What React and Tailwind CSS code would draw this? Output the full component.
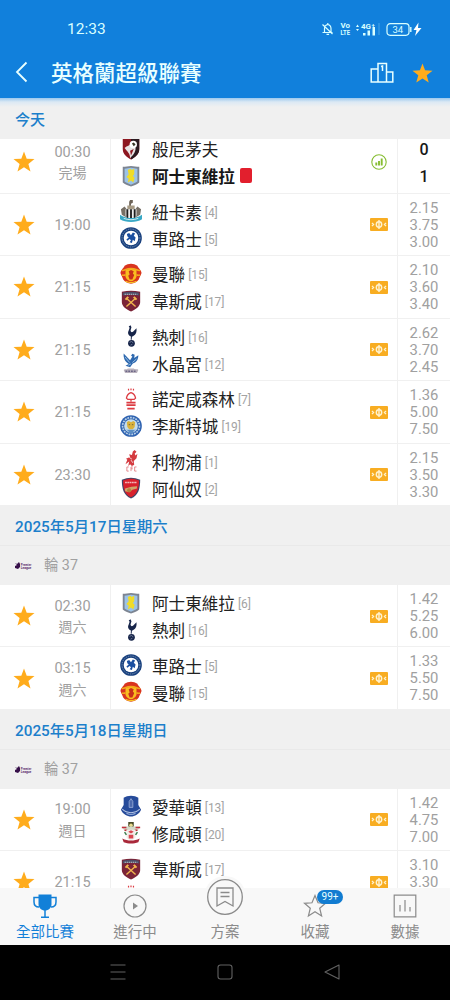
import clsx from "clsx";

const Star = ({ className }) => (
  <svg viewBox="0 0 24 24" className={className}>
    <path d="M12 1.5l2.7 7.2 7.8.4-6.1 4.8 2.1 7.6-6.500-4.300-6.500 4.300 2.100-7.600L1.500 9.100l7.800-.4z" fill="#ffac1c" />
  </svg>
);

const crests = {
  bournemouth: (
    <>
      <path d="M3 1h18v11c0 6-5 9-9 11.500C8 21 3 18 3 12z" fill="#8d1720" />
      <path d="M12 1h9v11c0 6-5 9-9 11.500z" fill="#2b1a20" />
      <path d="M5 11c3-3 5-2 7-5l5 5c0 5-3 8-6 11 0-5-3-7-6-11z" fill="#e8e3e3" />
      <circle cx="14.500" cy="7" r="4" fill="#fff" />
      <path d="M13 6l2-1 2 2-2 2z" fill="#332" />
      <path d="M11 14l4-2-3 7z" fill="#8d1720" />
    </>
  ),
  villa: (
    <>
      <path d="M3 2c3 0 6-1 9-1s6 1 9 1v17c-3 3-6 3-9 4.500-3-1.500-6-1.500-9-4.500z" fill="#7d8592" />
      <path d="M5 4c3 0 4-1 7-1s4 1 7 1v14c-2 2-5 2-7 3.500-2-1.500-5-1.500-7-3.500z" fill="#9cc3e8" />
      <path d="M8.500 5.500l3-1.500 1 1.500 3-1.500v6l-1.500 2 2 2-1.500 5-2.500-2-3.500 2 1-4-2.500-2 2.500-3z" fill="#f0dc28" />
    </>
  ),
  newcastle: (
    <>
      <path d="M11 0h3v3l-2 1v4h-2V2z" fill="#6d6357" />
      <path d="M8 6h8v6H8z" fill="#a89c86" />
      <path d="M1 10l4-3 3 4-1 8-5-3zM23 10l-4-3-3 4 1 8 5-3z" fill="#777066" />
      <path d="M6 10h12v6c0 4-3 5-6 6-3-1-6-2-6-6z" fill="#eee" />
      <path d="M7 10h2v10l-2-1zM11 10h2v11h-2zM15 10h2v9l-2 1z" fill="#1d1d1d" />
      <path d="M0 16c7 5 17 5 24 0v5c-6 4-18 4-24 0z" fill="#38a8c5" />
      <path d="M4 20c5 2 11 2 16 0" stroke="#d8f0f2" strokeWidth="1" fill="none" />
    </>
  ),
  chelsea: (
    <>
      <circle cx="12" cy="12" r="11.800" fill="#173f7d" />
      <circle cx="12" cy="12" r="9.800" fill="none" stroke="#7f97b8" strokeWidth="1" strokeDasharray="1.500 1" />
      <circle cx="12" cy="12" r="8" fill="#fff" />
      <path d="M7.500 7.500l2.500-1 2 2.500 2-3 2.500 1-1.500 2.500 2 2-1 4-2-1.500-1 3.500-2.500-1 1.500-2-1.500-1.500-2.500 2-1-1.500 2.500-2-1.500-1.500z" fill="#1b4fa0" />
    </>
  ),
  manutd: (
    <>
      <path d="M5 3c4-3 10-3 14 0 1 3 4 4 4.500 8-1 3-2 4-3 7-4 6-13 6-17 0-1-3-2-4-3-7C1 7 4 6 5 3z" fill="#d9341f" />
      <path d="M2 8c3 1 4-2 10-2s7 3 10 2M2 13c2 1 3 0 4 0M18 13c1 0 2 1 4 0" stroke="#f2a81c" strokeWidth="1.800" fill="none" />
      <path d="M6 8c4-2 8-2 12 0v7c-1 3-4 5-6 5s-5-2-6-5z" fill="#f9bd1f" />
      <path d="M9.500 9l2.500-1.500L15 9l-1 2.500 1.500 1.500-2 5h-3L9 14l1.500-1.500z" fill="#c8301a" />
      <path d="M6 20c4 2 8 2 12 0" stroke="#f8c524" strokeWidth="1.300" fill="none" />
    </>
  ),
  westham: (
    <>
      <path d="M2 2c7-1.500 13-1.500 20 0v11c0 5-5 8-10 10.500C7 21 2 18 2 13z" fill="#7b2437" />
      <path d="M3 3c6-1.500 12-1.500 18 0v3c-6-1-12-1-18 0z" fill="#4c4b66" />
      <path d="M5 4.600h14" stroke="#bcc" strokeWidth="1.200" strokeDasharray="1.500 .7" />
      <path d="M7 9l10 9M17 9L7 18" stroke="#f1b64e" strokeWidth="1.500" />
      <path d="M6 10.500L9 7.500M18 10.500L15 7.500" stroke="#f1b64e" strokeWidth="2.300" />
    </>
  ),
  spurs: (
    <>
      <circle cx="12.500" cy="20" r="3.700" fill="#17254a" />
      <path d="M9.500 1.500L11.500.3l1 2.200-1 3.500c.5 2.500 2 2.500 4 0l2.500-2.500c.5 4-.5 7-3.500 8.500l-1.500.8-.3 3.200h-1l.2-3.500C9 11.500 8 8.500 9.500 6l1-3z" fill="#17254a" />
      <path d="M10.500 19l2-1 2 1.500M11.500 22l2-1" stroke="#8692aa" strokeWidth=".8" fill="none" />
    </>
  ),
  palace: (
    <>
      <path d="M11 9L4 1.500c-.5 5 1.500 9 5.500 11.500L6 15l5 1.500 3-4c3.500-1 6-4 6-9l-4.500 3 .5-3.500-2.500-1-1.500 2 1.500 1z" fill="#2e69af" />
      <path d="M5.500 5.500l5 6M18 7.500l-4.500 4M9 14.500l3-1.500" stroke="#9fc2e4" strokeWidth="1" />
      <path d="M4 19.500c2-1.500 4 0 5-1.500h6c2 1.500 4 0 5 1.500L18.500 23h-13z" fill="#b9b2bd" />
      <path d="M6 21h12" stroke="#6d6687" strokeWidth="1.500" strokeDasharray="2 1" />
    </>
  ),
  forest: (
    <g fill="none" stroke="#dc3b42">
      <path d="M9.300 .8v1.800M12 .5v2M14.700 .8v1.800" strokeWidth="1.300" />
      <path d="M12 5c-3.500 1-4.500 3.500-5 6l1.500 1.500h7L17 11c-.5-2.500-1.500-5-5-6zM12 12.500V15" strokeWidth="1.400" />
      <path d="M7 16h10M7 18.700h10M8 22.500h8" strokeWidth="1.900" />
    </g>
  ),
  leicester: (
    <>
      <circle cx="12" cy="12" r="11.800" fill="#2e62b0" />
      <circle cx="12" cy="12" r="9.200" fill="none" stroke="#b8d0e8" strokeWidth="1.800" strokeDasharray="2 1" />
      <circle cx="12" cy="12" r="7.500" fill="#c5dcea" />
      <path d="M7.500 8l2-1.500L12 8l2.500-1.500 2 1.500-.5 5-2 2.500h-4L8 13z" fill="#d9b23c" />
      <path d="M6.500 16h11L15 17.500 14 20h-4l-1-2.500z" fill="#5c8fc4" />
      <path d="M9.500 10.500h1.500M13 10.500h1.500" stroke="#76633a" strokeWidth="1" />
    </>
  ),
  liverpool: (
    <>
      <path d="M16 0l2 2-2 2 1 2 2-2-1 5-3 3 .5 4-2.500 1.500-2-2-2 2 1-5-4 3 2-5-1.500-1 4.500-2-1-3 3 1 1-4z" fill="#d43a3f" />
      <path d="M10 8l3 2M12 11l2 3" stroke="#fff" strokeWidth=".8" />
      <path d="M9.500 18.500h-2V23h2M12 23v-4.500h2M12 20.500h2M18 18.500h-2V23h2" fill="none" stroke="#df747b" strokeWidth=".9" />
    </>
  ),
  arsenal: (
    <>
      <path d="M2 3c7-3 13-3 20 0 0 10-2 17-10 20.500C4 20 2 13 2 3z" fill="#3d4468" />
      <path d="M3.300 3.800c6-2.500 11.500-2.500 17.400 0 0 9-2 15-8.700 18.400C5.300 19 3.300 13 3.300 3.800z" fill="#d8212c" />
      <path d="M5.500 6h13" stroke="#f2b9ba" strokeWidth="1.800" strokeDasharray="2 .5" />
      <path d="M5.500 12.500l7-2 6-.5v2.500l-5 1.500-3.500 2.500-4.500-1z" fill="#cfa66b" />
      <circle cx="10" cy="14.500" r="2.300" fill="#b6813f" />
    </>
  ),
  everton: (
    <>
      <path d="M4 3c4-3 12-3 16 0v8l3 5c-2 5-7 7-11 7.500C8 23 3 21 1 16l3-5z" fill="#264b9a" />
      <path d="M2.500 15.500c5 5 14 5 19 0" stroke="#b9c8e6" strokeWidth="1.100" fill="none" />
      <path d="M10 13.500V7l2-3 2 3v6.500z" stroke="#9bb0da" strokeWidth=".9" fill="#4b69ad" />
      <path d="M7 20c3 1.500 7 1.500 10 0" stroke="#8ea6d4" strokeWidth="1.200" fill="none" />
    </>
  ),
  southampton: (
    <>
      <path d="M9 0h6v5l-3 2-3-2z" fill="#494b27" />
      <circle cx="12" cy="3.500" r="1.900" fill="#e9dc8e" />
      <path d="M2 5h20l-3 5H5z" fill="#d4d9c8" />
      <path d="M2 6h5M17 6h5M5 9h3M16 9h3" stroke="#c3303d" strokeWidth="1.800" />
      <path d="M7 8.500h10V17l-5 4-5-4z" fill="#f3eeea" />
      <path d="M9 10.500l3-1.500 3 1.500-3 2zM9.500 14h5v4h-5z" fill="#d84650" />
      <path d="M5 11l2 3M19 11l-2 3" stroke="#3d7c4c" strokeWidth="1.600" />
      <path d="M2.500 18c6 3 13 3 19 0l-1.500 4c-5 2-11 2-16 0z" fill="#a9283a" />
    </>
  ),
};

const Crest = ({ name }) => (
  <svg viewBox="0 0 24 24" className="h-[22px] w-[22px] shrink-0">
    {crests[name]}
  </svg>
);

const FieldIcon = () => (
  <svg viewBox="0 0 18 13" className="h-[13px] w-[18px]">
    <rect width="18" height="13" rx="1" fill="#f8ad22" />
    <g fill="none" stroke="#fff3d0" strokeWidth="1.400">
      <circle cx="9" cy="6.500" r="2.700" />
      <path d="M9 2v9M2 5l1.500 1.500L2 8M16 5l-1.500 1.500L16 8" />
    </g>
  </svg>
);

const StatsIcon = () => (
  <svg viewBox="0 0 16 16" className="h-4 w-4">
    <circle cx="8" cy="8" r="7.200" fill="#fff" stroke="#86bd32" strokeWidth="1.100" />
    <path d="M5.300 8.500v3M8 7v4.500M10.700 4.500v7" stroke="#86bd32" strokeWidth="1.900" />
  </svg>
);

const todayMatches = [
  { time: "19:00", home: ["newcastle", "紐卡素", 4], away: ["chelsea", "車路士", 5], odds: ["2.15", "3.75", "3.00"] },
  { time: "21:15", home: ["manutd", "曼聯", 15], away: ["westham", "韋斯咸", 17], odds: ["2.10", "3.60", "3.40"] },
  { time: "21:15", home: ["spurs", "熱刺", 16], away: ["palace", "水晶宮", 12], odds: ["2.62", "3.70", "2.45"] },
  { time: "21:15", home: ["forest", "諾定咸森林", 7], away: ["leicester", "李斯特城", 19], odds: ["1.36", "5.00", "7.50"] },
  { time: "23:30", home: ["liverpool", "利物浦", 1], away: ["arsenal", "阿仙奴", 2], odds: ["2.15", "3.50", "3.30"] },
];

const finishedMatch = { time: "00:30", note: "完場", home: ["bournemouth", "般尼茅夫"], away: ["villa", "阿士東維拉"], score: [0, 1], winner: "away", redCard: true };

const saturdayMatches = [
  { time: "02:30", note: "週六", home: ["villa", "阿士東維拉", 6], away: ["spurs", "熱刺", 16], odds: ["1.42", "5.25", "6.00"] },
  { time: "03:15", note: "週六", home: ["chelsea", "車路士", 5], away: ["manutd", "曼聯", 15], odds: ["1.33", "5.50", "7.50"] },
];

const sundayMatches = [
  { time: "19:00", note: "週日", home: ["everton", "愛華頓", 13], away: ["southampton", "修咸頓", 20], odds: ["1.42", "4.75", "7.00"] },
  { time: "21:15", home: ["westham", "韋斯咸", 17], away: ["forest"], odds: ["3.10", "3.30"] },
];

const Team = ({ team, bold, redCard }) => {
  const [crest, name, rank] = team;
  return (
    <div className="flex h-[27px] items-center">
      <Crest name={crest} />
      {name && <span className={clsx("ml-[10px] pt-[5px] text-[16.600px] leading-[22px] whitespace-nowrap", bold ? "font-bold text-[#171717]" : "text-[#222]")}>{name}</span>}
      {rank && <span className="ml-[3px] pt-[3px] text-[12px] leading-[18px] tracking-[-0.1px] text-[#a3a3a3]">[{rank}]</span>}
      {redCard && <span className="ml-[5px] h-[15px] w-3 rounded-[2px] bg-[#e21f2d]" />}
    </div>
  );
};

const MatchRow = ({ match }) => (
  <div className="flex h-[62.5px] shrink-0 border-b border-[#f0f0f0] bg-white">
    <div className="flex w-[111px] items-center border-r border-[#f0f0f0]">
      <Star className="mt-px ml-3 h-6 w-6 shrink-0" />
      <div className="ml-[3px] flex w-[67px] flex-col items-center pt-[3px] text-[14.500px] leading-[20.500px] text-[#a0a0a0]">
        <span>{match.time}</span>
        {match.note && <span className="text-[14px]">{match.note}</span>}
      </div>
    </div>
    <div className="flex flex-1 flex-col justify-center pt-px pl-[9px]">
      <Team team={match.home} bold={match.winner === "home"} />
      <Team team={match.away} bold={match.winner === "away"} redCard={match.redCard} />
    </div>
    <div className="flex w-[36px] items-center justify-center pt-px">{match.score ? <StatsIcon /> : <FieldIcon />}</div>
    <div className="flex w-[53px] flex-col items-center border-l border-[#f0f0f0] pt-[6px]">
      {match.score
        ? match.score.map((goals, i) => (
            <span key={i} className="text-base leading-[26.500px] font-medium text-[#171717]">
              {goals}
            </span>
          ))
        : match.odds.map((odd, i) => (
            <span key={i} className="text-[14.800px] leading-[17px] text-[#a0a0a0]">
              {odd}
            </span>
          ))}
    </div>
  </div>
);

const DateHeader = ({ date }) => (
  <>
    <div className="flex h-10 shrink-0 items-center border-b border-[#e9e9e9] bg-[#f0f0f0] pt-1 pl-[15px] text-[15.300px] font-medium text-[#1c7fcb]">{date}</div>
    <div className="flex h-[38.750px] shrink-0 items-center bg-[#f0f0f0] pt-px pl-[14px] text-[14.300px] text-[#a0a0a0]">
      <svg viewBox="0 0 18 9" className="h-[9px] w-[18px] overflow-visible">
        <path d="M1 2l2 1 2-2 1 2v3L4 8 1 7V5l2-1z" fill="#37104a" />
        <text x="6.800" y="4.500" fontSize="3.900" fontWeight="700" fill="#5c2d6e" textLength="10.500" lengthAdjust="spacingAndGlyphs">
          Premier
        </text>
        <text x="6.800" y="7.800" fontSize="3.900" fontWeight="700" fill="#5c2d6e" textLength="10.500" lengthAdjust="spacingAndGlyphs">
          League
        </text>
      </svg>
      <span className="ml-3">輪 37</span>
    </div>
  </>
);

const StatusBar = () => (
  <div className="flex h-[49px] items-center pt-[9px] pr-[27px] pl-[67px] text-[#d9ffff]">
    <span className="text-[15.500px] leading-5">12:33</span>
    <svg viewBox="0 0 100 16" className="ml-auto h-4 w-[100px] overflow-visible" fill="none" stroke="currentColor">
      <path d="M-.5 11.500H9.500M1.500 11V7.500c0-2.500 1-3.500 3.300-4 2.200.5 3.200 1.500 3.200 4V11M4.800 2v1.500M3.500 13.300h2.600M-.5 3.500l10 9.500" strokeWidth="1.200" />
      <g fill="currentColor" stroke="none" fontWeight="700">
        <text x="17.500" y="7.300" fontSize="7.500" textLength="9.500" lengthAdjust="spacingAndGlyphs">
          Vo
        </text>
        <text x="17.500" y="14" fontSize="7.500" textLength="9.500" lengthAdjust="spacingAndGlyphs">
          LTE
        </text>
        <text x="38" y="8" fontSize="8">
          4G
        </text>
        <text x="48.500" y="6" fontSize="6">
          +
        </text>
        <path d="M33 6l1.500-2.500L36 6zM33 8l1.500 2L36 8zM40 12h2.500v2.500H40zM44.500 9.500H47v5h-2.500zM49.500 6H52v8.500h-2.500z" />
      </g>
      <path d="M56 2v12" strokeWidth=".7" opacity=".4" />
      <rect x="64" y="2.700" width="22" height="11.600" rx="3.200" strokeWidth="1.200" />
      <path d="M87.800 6v5" strokeWidth="1.400" />
      <text x="69.500" y="12" fontSize="9.500" fill="currentColor" stroke="none">
        34
      </text>
      <path d="M95.500 1.500L90.500 9h3L92 15l6.500-8H95z" fill="#fff" stroke="none" />
    </svg>
  </div>
);

const TitleBar = () => (
  <div className="flex h-[49px] items-center pr-4 pl-[14px] text-[#e9ffff]">
    <svg viewBox="0 0 14 22" className="mb-[3px] h-[22px] w-[14px]" fill="none" stroke="currentColor" strokeWidth="1.800">
      <path d="M12.500 1.500L3 11l9.500 9.500" />
    </svg>
    <h1 className="ml-[23px] text-[21.500px] leading-7 font-medium whitespace-nowrap">英格蘭超級聯賽</h1>
    <svg viewBox="0 0 24 22" className="mb-[2px] ml-auto h-[22px] w-6" fill="none" stroke="currentColor" strokeWidth="1.500">
      <path d="M8 1.500h8.500V20H8zM8 7H1.200v13H8M16.500 10h6.300v10h-6.300M11 4.500l1.500-.5v5" />
    </svg>
    <Star className="mb-px ml-[17px] h-[23px] w-[23px]" />
  </div>
);

const tabs = [
  {
    label: "全部比賽",
    active: true,
    icon: (
      <>
        <path d="M5.500.5h13V10c0 4-3 6.500-6.500 6.500S5.500 14 5.500 10z" fill="currentColor" stroke="none" />
        <path d="M6 3.500H1V8c0 3 2 5 5 5M18 3.500h5V8c0 3-2 5-5 5M12 15v8M8 23.300h8" strokeWidth="1.500" />
      </>
    ),
  },
  {
    label: "進行中",
    icon: (
      <>
        <circle cx="12" cy="12" r="11" />
        <path d="M10 8.500l5 3.500-5 3.500z" fill="currentColor" stroke="none" />
      </>
    ),
  },
  { label: "方案", center: true },
  {
    label: "收藏",
    badge: "99+",
    icon: <path d="M12 1.500l3 7.300 7.500.5-5.800 4.900 1.900 7.800-6.600-4.200L5.400 22l1.900-7.800-5.800-4.900 7.500-.5z" />,
  },
  {
    label: "數據",
    icon: <path d="M1.200 1.200h21.600v21.600H1.200zM7 11v6.500M12 6v11.500M17 13v4.500" />,
  },
];

const TabBar = () => (
  <nav className="relative flex h-[57px] shrink-0 bg-[#f8f8f8]">
    {tabs.map((tab) => (
      <div key={tab.label} className={clsx("relative flex flex-1 flex-col items-center justify-end pb-[2px]", tab.active ? "text-[#1280d8]" : "text-[#8b8b8b]")}>
        {tab.center ? (
          <div className="absolute -top-[12px] rounded-full bg-[#f8f8f8] p-[2px]">
            <svg viewBox="0 0 38 38" className="h-[38px] w-[38px]" fill="none" stroke="currentColor" strokeWidth="1.300">
              <circle cx="19" cy="19" r="17.300" />
              <path d="M11 10h16v18l-8-4.500-8 4.500zM14.500 14.500h9M14.500 18.500h9" />
            </svg>
          </div>
        ) : (
          <svg viewBox="0 0 24 24" className="mb-[4px] h-6 w-6" fill="none" stroke="currentColor" strokeWidth="1.200">
            {tab.icon}
          </svg>
        )}
        {tab.badge && <span className="absolute top-[2px] left-[47px] h-[14px] w-[26px] rounded-full bg-[#117cd1] text-center text-[10px] leading-[14px] text-[#e8ffff]">{tab.badge}</span>}
        <span className="text-[14.500px] leading-[21px]">{tab.label}</span>
      </div>
    ))}
  </nav>
);

const SystemBar = () => (
  <div className="flex h-[55px] shrink-0 items-center justify-center gap-[91px] bg-black pb-px text-[#626262]">
    <svg viewBox="0 0 16 16" className="h-4 w-4" fill="none" stroke="currentColor" strokeWidth="1.100">
      <path d="M.5 1h15M.5 8h15M.5 15h15" />
    </svg>
    <svg viewBox="0 0 16 16" className="h-4 w-4" fill="none" stroke="currentColor" strokeWidth="1.100">
      <rect x="1" y="1" width="14" height="14" rx="2.500" />
    </svg>
    <svg viewBox="0 0 16 16" className="h-4 w-4" fill="none" stroke="currentColor" strokeWidth="1.100" strokeLinejoin="round">
      <path d="M15 1v14L1 8z" />
    </svg>
  </div>
);

const App = () => {
  return (
    <div className="flex h-[1000px] w-[450px] flex-col overflow-hidden bg-white font-[Roboto,'Noto_Sans_CJK_TC',sans-serif]">
      <header className="h-[98px] shrink-0 bg-[#1180dc]">
        <StatusBar />
        <TitleBar />
      </header>
      <div className="flex h-[41px] shrink-0 items-center bg-[linear-gradient(#9bc8ee,#dce9f4_4px,#f0f0f0_9px)] pt-[3px] pl-[15px] text-[15px] font-medium text-[#1c7fcb]">今天</div>
      <main className="flex min-h-0 flex-1 flex-col overflow-hidden">
        {/* Scrolled partly under the sticky date */}
        <div className="flex h-[54.500px] shrink-0 flex-col justify-end overflow-hidden">
          <MatchRow match={finishedMatch} />
        </div>
        {todayMatches.map((match) => (
          <MatchRow key={match.home[1]} match={match} />
        ))}
        <DateHeader date="2025年5月17日星期六" />
        {saturdayMatches.map((match) => (
          <MatchRow key={match.home[1]} match={match} />
        ))}
        <DateHeader date="2025年5月18日星期日" />
        {sundayMatches.map((match) => (
          <MatchRow key={match.home[1]} match={match} />
        ))}
      </main>
      <TabBar />
      <SystemBar />
    </div>
  );
};

export default App;
